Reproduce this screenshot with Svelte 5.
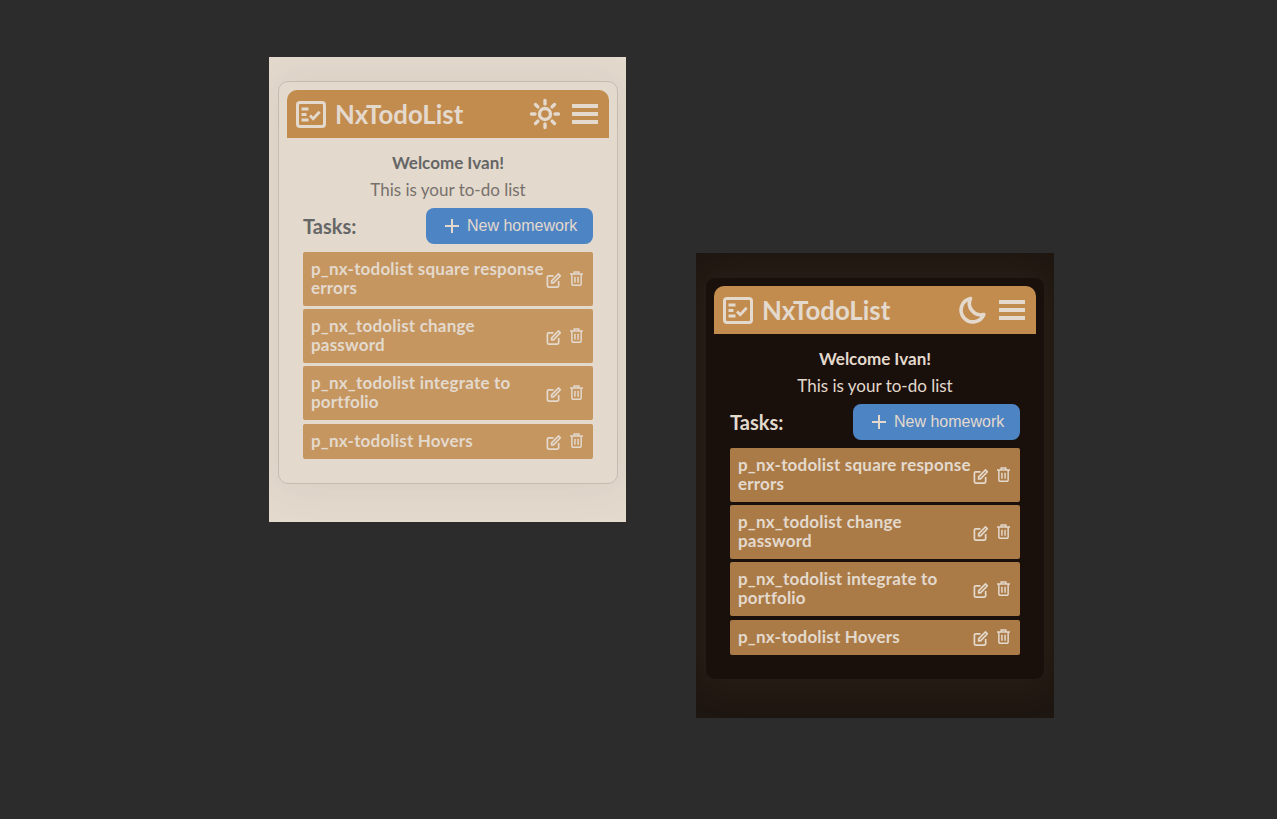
<script>
  const tasks = [
    'p_nx-todolist square response errors',
    'p_nx_todolist change password',
    'p_nx_todolist integrate to portfolio',
    'p_nx-todolist Hovers'
  ]
</script>

{#snippet todo(theme)}
  <section class="window {theme}">
    <div class="card">
      <header class="topbar">
        <svg class="logo" viewBox="0 0 30 27" fill="none" stroke="currentColor">
          <rect x="1.500" y="1.500" width="27" height="24" rx="2.500" stroke-width="3" />
          <path d="M5.500 8h7M5.500 13.500h5M5.500 19h7" stroke-width="2.800" />
          <path d="M14 14.500l3.200 3.200 6.500-7" stroke-width="2.800" />
        </svg>
        <h1>NxTodoList</h1>
        {#if theme === 'light'}
          <svg class="mode" viewBox="0 0 32 32" fill="none" stroke="currentColor" stroke-width="3.400" stroke-linecap="round">
            <circle cx="16" cy="16" r="5.500" />
            <path d="M16 2.500v3.500M16 26v3.500M2.500 16h3.500M26 16h3.500M6.500 6.500l2.400 2.400M23.100 23.100l2.400 2.400M6.500 25.500l2.400-2.400M23.100 8.900l2.400-2.400" />
          </svg>
        {:else}
          <svg class="mode" viewBox="0 0 32 32" fill="none" stroke="currentColor" stroke-width="3.600" stroke-linejoin="round">
            <path d="M14.500 4.500A11.800 11.800 0 1 0 27.800 20.500 11.500 11.500 0 0 1 14.500 4.500Z" />
          </svg>
        {/if}
        <div class="burger"><span></span><span></span><span></span></div>
      </header>
      <div class="content">
        <p class="welcome">Welcome Ivan!</p>
        <p class="sub">This is your to-do list</p>
        <div class="tasks-head">
          <h2>Tasks:</h2>
          <button class="add">
            <svg viewBox="0 0 14 14" fill="none" stroke="currentColor" stroke-width="2"><path d="M7 0v14M0 7h14" /></svg>
            New homework
          </button>
        </div>
        <ul>
          {#each tasks as task}
            <li>
              <span class="name">{task}</span>
              <svg class="edit" viewBox="0 0 16 16" fill="none" stroke="currentColor" stroke-width="1.800">
                <path d="M8 3H2.800A1.300 1.300 0 0 0 1.500 4.300v9.400A1.300 1.300 0 0 0 2.800 15h9.400a1.300 1.300 0 0 0 1.300-1.300V8.500" />
                <path d="M6 10.500V8.300L13.300 1l2 2-7.300 7.500Z" />
              </svg>
              <svg class="trash" viewBox="0 0 14 16" fill="none" stroke="currentColor" stroke-width="1.600">
                <path d="M0 3.200h14M4.500 3V1h5v2M2 3.500v10.300A1.500 1.500 0 0 0 3.500 15.300h7a1.500 1.500 0 0 0 1.500-1.500V3.500M5.300 6v6.500M8.700 6v6.500" />
              </svg>
            </li>
          {/each}
        </ul>
      </div>
    </div>
  </section>
{/snippet}

<main>
  {@render todo('light')}
  {@render todo('dark')}
</main>

<style>
  :global(body) {
    background: #2c2c2c;
  }
  main {
    position: relative;
    height: 819px;
    overflow: hidden;
    font-family: Lato, "Liberation Sans", sans-serif;
  }
  .window {
    position: absolute;
    box-sizing: border-box;
    width: 357px;
    height: 465px;
    padding: 24px 0 0 9px;
    overflow: hidden;
  }
  .light {
    left: 269px;
    top: 57px;
    background: #e3d9cd;
    color: #666;
    --line: #c4bbb1;
    --item: #c69660;
    --sub: #77716c;
    --glow: rgba(100, 80, 60, 0.08);
  }
  .dark {
    left: 696px;
    top: 253px;
    width: 358px;
    background: #1e1610;
    color: #e3d9cd;
    --line: #241b15;
    --item: #ab7b47;
    --sub: #e3d9cd;
    --glow: rgba(130, 110, 95, 0.14);
  }
  .card {
    box-sizing: border-box;
    width: 340px;
    height: 403px;
    padding: 8px;
    border: 1px solid var(--line);
    border-radius: 10px;
    box-shadow: 0 0 40px 2px var(--glow);
  }
  .dark .card {
    background: #19100c;
  }
  .topbar {
    display: flex;
    align-items: center;
    height: 48px;
    padding: 0 11px 0 9px;
    background: #c38c4f;
    color: #e3d9cd;
    border-radius: 10px 10px 0 0;
  }
  .logo {
    width: 30px;
    height: 27px;
    margin-right: 9px;
  }
  h1 {
    flex: 1;
    margin: 0;
    font-size: 25.800px;
    font-weight: 700;
  }
  .mode {
    width: 32px;
    height: 32px;
    margin-right: 11px;
  }
  .burger {
    display: flex;
    flex-direction: column;
    gap: 4.500px;
    width: 26px;
  }
  .burger span {
    height: 3.500px;
    background: currentColor;
  }
  .content {
    padding: 15px 16px 0;
  }
  .welcome,
  .sub {
    margin: 0;
    text-align: center;
    font-size: 17px;
    line-height: 20px;
  }
  .welcome {
    font-weight: 700;
  }
  .sub {
    margin-top: 7px;
    color: var(--sub);
    font-weight: 400;
  }
  .tasks-head {
    display: flex;
    align-items: center;
    justify-content: space-between;
    margin-top: 8px;
    margin-bottom: 8px;
  }
  h2 {
    margin: 0;
    font-size: 20px;
    font-weight: 700;
  }
  .add {
    display: flex;
    align-items: center;
    gap: 8px;
    box-sizing: border-box;
    width: 167px;
    height: 36px;
    padding: 0 0 0 19px;
    border: none;
    border-radius: 8px;
    background: #4d84c4;
    color: #e3d9cd;
    font: 16px "Liberation Sans", sans-serif;
  }
  .add svg {
    width: 14px;
    height: 14px;
  }
  ul {
    display: flex;
    flex-direction: column;
    gap: 3px;
    margin: 0;
    padding: 0;
    list-style: none;
  }
  li {
    display: flex;
    align-items: center;
    box-sizing: border-box;
    min-height: 35px;
    padding: 7px 8px 9px;
    background: var(--item);
    color: #e3d9cd;
    border-radius: 2px;
  }
  li:last-child {
    margin-top: 1px;
  }
  .name {
    flex: none;
    width: 233px;
    font-size: 17px;
    font-weight: 700;
    letter-spacing: 0.200px;
    line-height: 19px;
  }
  .edit {
    flex: none;
    width: 15px;
    height: 15px;
    margin: 4px 0 0 2px;
  }
  .trash {
    flex: none;
    width: 13px;
    height: 15px;
    margin: 0 0 0 9px;
  }
</style>
